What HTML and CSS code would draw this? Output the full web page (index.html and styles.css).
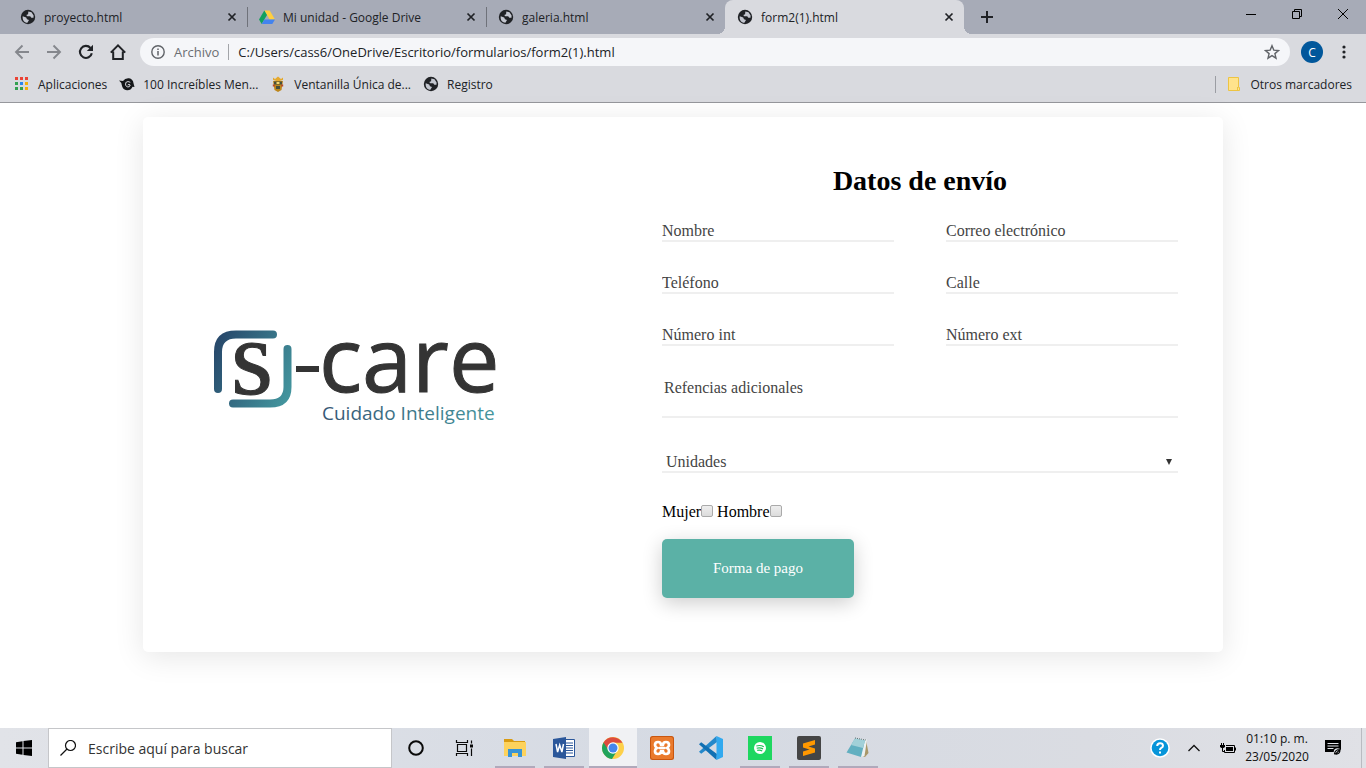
FILE: index.html
```html
<!DOCTYPE html>
<html lang="es">
<head>
<meta charset="utf-8">
<title>form2(1).html</title>
<link rel="stylesheet" href="styles.css">
</head>
<body>
<svg class="defs" aria-hidden="true">
  <symbol id="globe" viewBox="0 0 16 16"><circle cx="8" cy="8" r="7.2" fill="#202226"/><path d="M2.7 7.2 6.2 8.6 7 10.3 9 10.9 7.4 13.8C4.300 13.700 2.200 11 2.700 7.200zM8.300 2.600 11.500 3.200 13.600 6.400 13.500 8.800 11.300 8.800 10.200 7.300 7.200 7.200 6.300 6 8.100 5.200z" fill="#c3c6cf"/></symbol>
  <symbol id="close" viewBox="0 0 10 10"><path d="M1.500 1.500l7 7M8.500 1.500l-7 7" stroke="#202226" stroke-width="1.700" fill="none"/></symbol>
</svg>
<div class="desktop">
  <header class="browser">
    <div class="tabstrip">
      <nav class="tabs" aria-label="Pestañas">
        <div class="tab"><svg class="fav"><use href="#globe"/></svg><a href="#" class="tab-name">proyecto.html</a><button class="tab-close" aria-label="Cerrar"><svg><use href="#close"/></svg></button></div>
        <div class="tab"><svg class="fav" viewBox="0 0 16 16"><path d="M5.300 1.500h5.400L16 10.500h-5.300z" fill="#ffcf3f"/><path d="M5.300 1.500 8 6 2.700 15 0 10.500z" fill="#12a15e"/><path d="M5.400 10.500H16L13.300 15H2.700z" fill="#4383ee"/></svg><a href="#" class="tab-name">Mi unidad - Google Drive</a><button class="tab-close" aria-label="Cerrar"><svg><use href="#close"/></svg></button></div>
        <div class="tab"><svg class="fav"><use href="#globe"/></svg><a href="#" class="tab-name">galeria.html</a><button class="tab-close" aria-label="Cerrar"><svg><use href="#close"/></svg></button></div>
        <div class="tab active"><svg class="fav"><use href="#globe"/></svg><a href="#" class="tab-name">form2(1).html</a><button class="tab-close" aria-label="Cerrar"><svg><use href="#close"/></svg></button></div>
      </nav>
      <button class="new-tab" aria-label="Nueva pestaña"><svg viewBox="0 0 12 12" width="12" height="12"><path d="M6 0v12M0 6h12" stroke="#202226" stroke-width="2"/></svg></button>
      <div class="window-controls">
        <button aria-label="Minimizar"><svg viewBox="0 0 12 12" width="12" height="12"><path d="M1 6.500h10" stroke="#000"/></svg></button>
        <button aria-label="Restaurar"><svg viewBox="0 0 12 12" width="12" height="12" fill="none" stroke="#000"><path d="M1.500 3.500h7v7h-7zM3.500 3.500v-2h7v7h-2"/></svg></button>
        <button aria-label="Cerrar"><svg viewBox="0 0 12 12" width="12" height="12"><path d="M1 1l10 10M11 1 1 11" stroke="#000"/></svg></button>
      </div>
    </div>
    <div class="toolbar">
      <button class="tool" aria-label="Atrás"><svg viewBox="0 0 16 16"><path d="M15 8H2M8.500 1.500 2 8l6.500 6.500" fill="none" stroke="#85878d" stroke-width="1.900"/></svg></button>
      <button class="tool" aria-label="Adelante"><svg viewBox="0 0 16 16"><path d="M1 8h13M7.500 1.500 14 8l-6.500 6.500" fill="none" stroke="#85878d" stroke-width="1.900"/></svg></button>
      <button class="tool" aria-label="Recargar"><svg viewBox="0 0 16 16"><path d="M13.800 9.200A6 6 0 1 1 12.500 4" fill="none" stroke="#202226" stroke-width="2.100"/><path d="M15 .8v6.200H8.800z" fill="#202226"/></svg></button>
      <button class="tool" aria-label="Inicio"><svg viewBox="0 0 16 16"><path d="M.8 8.600 8 1.400l7.200 7.200M3.200 7.500V15h9.600V7.500" fill="none" stroke="#202226" stroke-width="2"/></svg></button>
      <div class="omnibox">
        <svg class="info" viewBox="0 0 14 14"><circle cx="7" cy="7" r="6.200" fill="none" stroke="#606368" stroke-width="1.400"/><path d="M7 6v4.500M7 3.400v1.500" stroke="#606368" stroke-width="1.500"/></svg>
        <span class="scheme">Archivo</span>
        <input class="address" aria-label="Dirección" value="C:/Users/cass6/OneDrive/Escritorio/formularios/form2(1).html">
        <button class="star" aria-label="Añadir a marcadores"><svg viewBox="0 0 16 16" width="16" height="16"><path d="m8 1.700 1.800 4.400 4.700.4-3.600 3.100 1.100 4.600L8 11.700l-4 2.500 1.100-4.600L1.500 6.500l4.700-.4z" fill="none" stroke="#606368" stroke-width="1.400"/></svg></button>
      </div>
      <button class="avatar" aria-label="Perfil">C</button>
      <button class="menu" aria-label="Menú"><svg viewBox="0 0 4 14" width="4" height="14" fill="#202226"><circle cx="2" cy="2" r="1.600"/><circle cx="2" cy="7" r="1.600"/><circle cx="2" cy="12" r="1.600"/></svg></button>
    </div>
    <nav class="bookmarks" aria-label="Marcadores">
      <a href="#"><svg viewBox="-1 -1 16 16"><path fill="#ea4335" d="M0 0h3v3H0zM5 0h3v3H5zM10 0h3v3h-3z"/><path fill="#34a050" d="M0 5h3v3H0zM0 10h3v3H0zM5 10h3v3H5z"/><path fill="#2b85f0" d="M5 5h3v3H5z"/><path fill="#f6ae09" d="M10 5h3v3h-3zM10 10h3v3h-3z"/></svg>Aplicaciones</a>
      <a href="#"><svg viewBox="0 0 16 16"><path d="M0 4.500 4 5Q6 1.800 10 2.200q4 .8 4.500 5l1 3.800-2-.2Q12 14.500 8 14.300q-4.500-.5-5.300-5.500Q2.500 6.500 0 4.500z" fill="#15171a"/><path d="M11.300 6.300Q8.800 4.600 6.800 6.500 5.600 9.500 8.300 11q2.600.4 2.900-2-1.300-1.300-2.500 0" fill="none" stroke="#d9dadf"/></svg>100 Increíbles Men...</a>
      <a href="#"><svg viewBox="0 0 16 16"><path d="M3 5h10l-1.500 9L8 16l-3.500-2z" fill="#bd861b"/><path d="M3 1.500 5 3l3-2.500L11 3l2-1.500V4L8 5.500 3 4z" fill="#e5a92e"/><path d="M4 5.500h8v3H4zM6 10h4v3H6z" fill="#46503d"/><path d="M6.500 6h3v2h-3z" fill="#f2d775"/><path d="M2.800 8.500h2v2h-2zM11.200 8.500h2v2h-2z" fill="#b5482c"/></svg>Ventanilla Única de...</a>
      <a href="#"><svg><use href="#globe"/></svg>Registro</a>
      <a href="#" class="others"><svg viewBox="0 0 16 16"><path d="M2.500 1.500h10v10h1v3h-11z" fill="#ffe38c" stroke="#edc443"/><path d="M11.500 11v3.500" stroke="#edc443"/></svg>Otros marcadores</a>
    </nav>
  </header>

  <main class="page">
    <section class="card">
      <div class="brand">
        <svg class="logo" viewBox="0 0 286 96" role="img" aria-label="S-care Cuidado Inteligente">
          <defs>
            <linearGradient id="frame" gradientUnits="userSpaceOnUse" x1="0" y1="20" x2="78" y2="58"><stop offset="0" stop-color="#284a6c"/><stop offset="1" stop-color="#43949d"/></linearGradient>
            <linearGradient id="tagline"><stop offset="0" stop-color="#365574"/><stop offset="1" stop-color="#45969e"/></linearGradient>
          </defs>
          <path d="M4 59V22Q4 4.500 22 4.500H59M73.500 19V57Q73.500 73.500 56 73.500H19" fill="none" stroke="url(#frame)" stroke-width="8" stroke-linecap="round"/>
          <text class="logo-s" x="17" y="64">s</text>
          <path d="M82 36h23v6H82z" fill="#343434"/>
          <text class="logo-care" x="105" y="62">care</text>
          <text class="logo-tag" x="108" y="90">Cuidado Inteligente</text>
        </svg>
      </div>
      <form class="shipping">
        <h1>Datos de envío</h1>
        <div class="fields">
          <input class="field" type="text" aria-label="Nombre" placeholder="Nombre">
          <input class="field" type="email" aria-label="Correo electrónico" placeholder="Correo electrónico">
          <input class="field" type="tel" aria-label="Teléfono" placeholder="Teléfono">
          <input class="field" type="text" aria-label="Calle" placeholder="Calle">
          <input class="field" type="text" aria-label="Número int" placeholder="Número int">
          <input class="field" type="text" aria-label="Número ext" placeholder="Número ext">
        </div>
        <textarea class="field notes" aria-label="Refencias adicionales" placeholder="Refencias adicionales"></textarea>
        <div class="select-wrap">
          <select class="field" aria-label="Unidades"><option>Unidades</option><option>1</option><option>2</option></select>
        </div>
        <div class="checks"><label for="mujer">Mujer</label><input type="checkbox" id="mujer"> <label for="hombre">Hombre</label><input type="checkbox" id="hombre"></div>
        <button class="submit" type="button">Forma de pago</button>
      </form>
    </section>
  </main>

  <footer class="taskbar">
    <button class="start" aria-label="Inicio"><svg viewBox="0 0 16 16" width="16" height="16"><path d="M0 2.200 6.500 1.300V7.500H0zM7.500 1.100 16 0v7.500H7.500zM0 8.500h6.500v6.200L0 13.800zM7.500 8.500H16V16l-8.500-1.100z"/></svg></button>
    <div class="search">
      <svg viewBox="0 0 16 16" width="16" height="16"><circle cx="10.500" cy="5.500" r="5" fill="none" stroke="#111" stroke-width="1.200"/><path d="M7 9 .5 15.500" stroke="#111" stroke-width="1.200"/></svg>
      <input type="text" aria-label="Buscar" placeholder="Escribe aquí para buscar">
    </div>
    <button class="system" aria-label="Cortana"><svg viewBox="0 0 24 24"><circle cx="12" cy="12" r="6.800" fill="none" stroke="#0a0a0a" stroke-width="2"/></svg></button>
    <button class="system" aria-label="Vista de tareas"><svg viewBox="0 0 24 24" fill="none" stroke="#0a0a0a" stroke-width="1.200"><path d="M5.500 8.500h9v7h-9zM4.500 4v2.500h11V4M4.500 20v-2.500h11V20M19.500 4.500v3M19.500 12.500V20"/><path d="M18 8.500h3v3h-3z" fill="#0a0a0a" stroke="none"/></svg></button>
    <nav class="apps" aria-label="Aplicaciones">
      <button class="app open" aria-label="Explorador"><svg viewBox="0 0 24 24"><path d="M1 3h8l2 2h11v5H1z" fill="#d99b12"/><path d="M1 6h22v14H1z" fill="#fdd25c"/><path d="M5 21v-8h14v8h-4v-4H9v4z" fill="#3994d5"/></svg></button>
      <button class="app open" aria-label="Word"><svg viewBox="0 0 24 24"><path d="M12 3.500h10.500v17H12z" fill="#fff" stroke="#2b579a"/><path d="M14 7h7M14 9.500h7M14 12h7M14 14.500h7M14 17h7" stroke="#2b579a"/><path d="M1 3 14 1v22L1 21z" fill="#2b579a"/><path d="m4 8 1.600 8L7.700 9l2.200 7 1.600-8" fill="none" stroke="#fff" stroke-width="1.500"/></svg></button>
      <button class="app open current" aria-label="Chrome"><svg viewBox="0 0 24 24"><circle cx="12" cy="12" r="11" fill="#fdd04a"/><path d="M12 12 2.500 6.500A11 11 0 0 0 11 23l5.500-9z" fill="#20a35b"/><path d="M2.500 6.500A11 11 0 0 1 21.500 6.700H12L7.500 14z" fill="#dd4b3e"/><circle cx="12" cy="12" r="5.700" fill="#fff"/><circle cx="12" cy="12" r="4.500" fill="#4686ed"/></svg></button>
      <button class="app" aria-label="XAMPP"><svg viewBox="0 0 24 24"><rect width="24" height="24" rx="2.500" fill="#c9560f"/><rect x="1" y="1" width="22" height="22" rx="2" fill="#ea7a2c"/><path d="M11 9Q11 6 8 6 5 6 5 9q0 2 2 3-2 1-2 3 0 3 3 3 3 0 3-3M13 9q0-3 3-3 3 0 3 3 0 2-2 3 2 1 2 3 0 3-3 3-3 0-3-3M9.500 12h5" fill="none" stroke="#fff" stroke-width="2.700" stroke-linecap="round" stroke-linejoin="round"/></svg></button>
      <button class="app" aria-label="Visual Studio Code"><svg viewBox="0 0 24 24"><path d="M17.500 0 0 15.800l2.200 2L18 6z" fill="#2488ca"/><path d="M17.500 24 0 8.200l2.200-2L18 18z" fill="#1070b3"/><path d="M17.500 0 24 3v18l-6.500 3z" fill="#31a9ef"/></svg></button>
      <button class="app open" aria-label="Spotify"><svg viewBox="0 0 24 24"><path d="M0 0h24v24H0z" fill="#1ed760"/><circle cx="12" cy="12" r="6" fill="#fff"/><path d="M8.300 10q4-1.300 7.500.7M8.700 12.300q3.300-1 6.300.6M9.200 14.400q2.700-.8 5 .5" fill="none" stroke="#1ec45a" stroke-width="1.200"/></svg></button>
      <button class="app open" aria-label="Sublime Text"><svg viewBox="0 0 24 24"><rect width="24" height="24" rx="2" fill="#454545"/><path d="m6 7.500 12-3.500v4.500l-6.500 2 6.500 2v4L6 20v-4.500l6.500-2-6.500-2z" fill="#ff9800"/></svg></button>
      <button class="app open" aria-label="Bloc de notas"><svg viewBox="0 0 24 24"><path d="m20 4 2.500 13-3.500 4-3-1z" fill="#a99768"/><path d="m9 2 12 1.500L18.500 20l-3.500 1z" fill="#edf1f1"/><path d="M9 2.500 19 4.500 15 21 .5 16.500z" fill="#62afc0"/><path d="M9 2.500 19 4.500 17 12 5 9z" fill="#a2d0d8"/><path d="M9 2 20 4" stroke="#58686c" stroke-dasharray="1 1"/></svg></button>
    </nav>
    <div class="tray">
      <button aria-label="Ayuda"><svg viewBox="0 0 20 20" width="20" height="20"><circle cx="10" cy="10" r="9.800" fill="#fff"/><circle cx="10" cy="10" r="8.300" fill="#0795d9"/><path d="M7.200 8q.1-2.700 2.900-2.700T13 7.700q0 1.300-1.700 2.200Q10 10.600 10 12M10 13.500v2" fill="none" stroke="#fff" stroke-width="2"/></svg></button>
      <button aria-label="Iconos ocultos"><svg viewBox="0 0 12 12" width="12" height="12"><path d="m.5 9 5.500-5.500L11.500 9" fill="none" stroke="#111" stroke-width="1.300"/></svg></button>
      <button aria-label="Batería"><svg viewBox="0 0 16 12" width="16" height="12"><path d="M0 3h5v2L3.500 6h-2L0 5zM6 5h7v4H6z"/><path d="M1.500 1v2M3.500 1v2M2.500 6v3.500h2M6 3.500h8.500v7h-10V8M15.500 5.500v3" fill="none" stroke="#000"/></svg></button>
      <time class="clock" datetime="2020-05-23T13:10"><span>01:10 p. m.</span><span>23/05/2020</span></time>
      <button class="notices" aria-label="Notificaciones"><svg viewBox="0 0 16 16" width="16" height="16"><path d="M0 0h16v12h-5l-2 3v-3H0z"/><path d="M2.500 3.500h11M2.500 6h11M2.500 8.500h6" stroke="#e1e3e8"/><circle cx="12.500" cy="12" r="3.800" fill="#e1e3e8"/><path d="M15 9.500q-5 0-5.500 4.500M15 9.500q0 5-4.500 4.500z" fill="none" stroke="#000" stroke-width="1.200"/></svg></button>
    </div>
  </footer>
</div>
</body>
</html>
```
FILE: styles.css
```css
* { box-sizing: border-box; }
body { margin: 0; font-family: "Open Sans", "Noto Sans", sans-serif; font-size: 12px; color: #202226; }
button { border: 0; padding: 0; margin: 0; background: none; font: inherit; color: inherit; display: flex; align-items: center; justify-content: center; flex-shrink: 0; }
input, select, textarea { font: inherit; margin: 0; min-width: 0; }
a { color: inherit; text-decoration: none; }
svg { display: block; flex-shrink: 0; }
.defs { width: 0; height: 0; position: absolute; }
.desktop { min-height: 100vh; display: flex; flex-direction: column; background: #fff; }

/* Browser chrome */
.browser { background: #d9dadf; border-bottom: 1px solid #96979c; }
.tabstrip { height: 34px; display: flex; background: #a7abb7; padding-left: 8px; }
.tabs { display: flex; flex: 0 1 956px; min-width: 0; }
.tab { position: relative; flex: 1 1 0; min-width: 0; display: flex; align-items: center; padding: 0 10px 0 12px; }
.tab:not(:first-child):not(.active)::before { content: ""; position: absolute; left: 0; top: 7px; width: 1px; height: 20px; background: #6f727a; }
.tab.active { background: #d9dadf; border-radius: 8px 8px 0 0; }
.tab.active::before, .tab.active::after { content: ""; position: absolute; bottom: 0; width: 8px; height: 8px; }
.tab.active::before { right: 100%; background: radial-gradient(circle at 0 0, transparent 8px, #d9dadf 8px); }
.tab.active::after { left: 100%; background: radial-gradient(circle at 100% 0, transparent 8px, #d9dadf 8px); }
.fav { width: 16px; height: 16px; margin-right: 8px; }
.tab-name { flex: 1; white-space: nowrap; overflow: hidden; }
.tab-close svg { width: 10px; height: 10px; }
.new-tab { width: 28px; margin-left: 9px; }
.window-controls { margin-left: auto; display: flex; padding-bottom: 6px; }
.window-controls button { width: 46px; }

.toolbar { height: 36px; display: flex; align-items: center; padding: 0 10px 0 6px; }
.tool { width: 32px; height: 28px; }
.tool svg { width: 16px; height: 16px; }
.omnibox { flex: 1; height: 28px; margin-left: 6px; border-radius: 14px; background: #f5f6f9; display: flex; align-items: center; padding: 0 10px 0 11px; font-size: 13px; }
.info { width: 14px; height: 14px; margin-right: 9px; }
.scheme { color: #6b6e73; padding-right: 9px; border-right: 1px solid #a3a5a9; line-height: 16px; }
.address { flex: 1; border: 0; background: none; padding: 0 0 0 9px; color: #202226; }
.avatar { width: 22px; height: 22px; border-radius: 50%; background: #01579b; color: #fff; margin-left: 11px; }
.menu { width: 24px; height: 24px; margin-left: 9px; }

.bookmarks { height: 32px; display: flex; align-items: center; gap: 12px; padding: 0 14px 4px 14px; }
.bookmarks a { display: flex; align-items: center; gap: 8px; white-space: nowrap; }
.bookmarks svg { width: 16px; height: 16px; }
.bookmarks .others { margin-left: auto; padding-left: 10px; border-left: 1px solid #9b9da3; }

/* Form page */
.page { flex: 1; padding: 14px 16px 16px; font-family: "Liberation Serif", serif; font-size: 16px; color: #000; }
.card { max-width: 1080px; margin: 0 auto; display: grid; grid-template-columns: 474px 1fr; background: #fff; border-radius: 5px; box-shadow: 0 5px 30px rgba(0, 0, 0, .1); }
.brand { display: flex; align-items: center; padding: 0 48px 14px 71px; }
.logo { width: 286px; height: 96px; overflow: visible; }
.logo-s { font: 108px "Liberation Serif", serif; fill: #343434; stroke: #343434; stroke-width: 1px; }
.logo-care { font: 90px "Open Sans", sans-serif; fill: #343434; stroke: #343434; stroke-width: 1px; }
.logo-tag { font: 19px "Open Sans", sans-serif; fill: url(#tagline); }
.shipping { padding: 48px 45px 54px; }
h1 { margin: 0 0 23px; font-size: 28px; line-height: 32px; text-align: center; }
.fields { display: grid; grid-template-columns: 1fr 1fr; gap: 30px 52px; }
.field { display: block; width: 100%; height: 22px; padding: 2px 0 0; border: 0; border-bottom: 2px solid #efefef; border-radius: 0; background: transparent; color: #444; line-height: 18px; appearance: none; }
.field::placeholder { color: #444; opacity: 1; }
.notes { height: 42px; margin-top: 30px; padding: 3px 2px 0; resize: none; overflow: hidden; }
.select-wrap { position: relative; margin-top: 33px; }
.select-wrap .field { padding-left: 4px; }
.select-wrap::after { content: ""; position: absolute; right: 6px; top: 8px; border: 3px solid transparent; border-top: 6px solid #333; border-bottom: 0; pointer-events: none; }
.checks { margin-top: 30px; line-height: 18px; }
.checks input { appearance: none; width: 12px; height: 12px; border: 1px solid #aaa; border-radius: 2px; background: linear-gradient(#eee, #dcdcdc); }
.submit { margin-top: 18px; padding: 20px 51px; border-radius: 5px; background: #5bb1a6; color: #fff; font-size: 15px; line-height: 19px; box-shadow: 0 5px 20px rgba(0, 0, 0, .2); }

/* Taskbar */
.taskbar { height: 40px; display: flex; background: linear-gradient(90deg, #e1e3e8, #d5dae3 50%, #dadce2 80%, #e0e1e6); }
.start { width: 48px; }
.search { flex: 0 1 344px; display: flex; align-items: center; gap: 12px; padding: 0 11px; border: 1px solid #c5c6c9; background: #fff; }
.search input { flex: 1; border: 0; padding: 0; font-size: 14px; background: none; }
.search input::placeholder { color: #333; opacity: 1; }
.system { width: 48px; }
.system svg, .app svg { width: 24px; height: 24px; }
.apps { display: flex; gap: 1px; margin-left: 3px; }
.app { width: 48px; position: relative; }
.app.open::after { content: ""; position: absolute; left: 4px; right: 4px; bottom: 0; height: 2px; background: #b0a9bb; }
.app.current { background: #f0f1f4; }
.app.current::after { left: 0; right: 0; }
.tray { margin: 0 4px 0 auto; display: flex; border-right: 1px solid #b9bbc1; }
.tray button { width: 34px; }
.clock { display: flex; flex-direction: column; justify-content: center; align-items: center; width: 56px; margin-left: 4px; line-height: 18px; white-space: nowrap; color: #111; font-size: 12px; }
.tray .notices { width: 56px; }
```
